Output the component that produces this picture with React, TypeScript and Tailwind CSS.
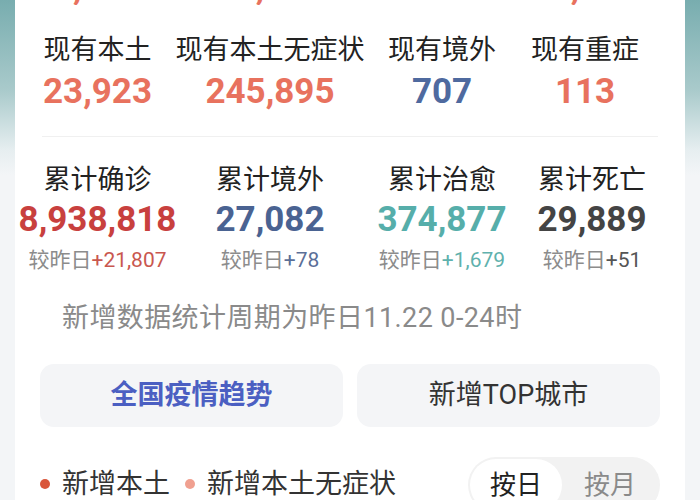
import React from "react";

const now = [
  { label: "现有本土", value: "23,923", color: "text-[#e8725e]" },
  { label: "现有本土无症状", value: "245,895", color: "text-[#e8725e]" },
  { label: "现有境外", value: "707", color: "text-[#4f6a9f]" },
  { label: "现有重症", value: "113", color: "text-[#e8725e]" },
];

const total = [
  { label: "累计确诊", value: "8,938,818", diff: "+21,807", color: "text-[#c8403e]", diffColor: "text-[#c9574f]" },
  { label: "累计境外", value: "27,082", diff: "+78", color: "text-[#4a6392]", diffColor: "text-[#5b6f98]" },
  { label: "累计治愈", value: "374,877", diff: "+1,679", color: "text-[#56aeaa]", diffColor: "text-[#5fb1ad]" },
  { label: "累计死亡", value: "29,889", diff: "+51", color: "text-[#444444]", diffColor: "text-[#555555]" },
];

// numbers of the row above, scrolled almost out of view
const cut = ["2,527", "24,936", "+12", "25,480"];

export default function App() {
  return (
    <div className="min-h-[500px] w-[700px] overflow-hidden bg-[linear-gradient(to_bottom,#78adaf_0px,#a9cacb_90px,#e6eef0_150px,#f3f5f7_175px,#f3f5f7_100%)] font-['Roboto','Noto_Sans_CJK_SC',sans-serif]">
      <div className="mx-[15px] h-[500px] overflow-hidden bg-white">
        {/* cut-off top row */}
        <div className="h-[5px] overflow-hidden">
          <div className="-mt-[32px] grid grid-cols-[165px_180px_164px_122px]">
            {cut.map((v, i) => (
              <div key={i} className="flex justify-center">
                <span className="whitespace-nowrap text-[35px] font-bold leading-[40px] text-[#e8725e]">{v}</span>
              </div>
            ))}
          </div>
        </div>

        {/* current */}
        <div className="mt-[29px] grid grid-cols-[165px_180px_164px_122px]">
          {now.map((s) => (
            <div key={s.label} className="flex flex-col items-center">
              <span className="whitespace-nowrap text-[27px] leading-[32px] text-[#222222]">{s.label}</span>
              <span className={`mt-[6px] whitespace-nowrap text-[35px] font-bold leading-[40px] ${s.color}`}>{s.value}</span>
            </div>
          ))}
        </div>

        <div className="mx-[27px] mt-[24px] h-px bg-[#f0f0f0]" />

        {/* cumulative */}
        <div className="mt-[27px] grid grid-cols-[165px_180px_164px_136px]">
          {total.map((s) => (
            <div key={s.label} className="flex flex-col items-center">
              <span className="whitespace-nowrap text-[27px] leading-[32px] text-[#222222]">{s.label}</span>
              <span className={`mt-[4px] whitespace-nowrap text-[35px] font-bold leading-[40px] ${s.color}`}>{s.value}</span>
              <span className="mt-[7px] whitespace-nowrap text-[21px] leading-[26px] text-[#8c8c8c]">
                较昨日<span className={s.diffColor}>{s.diff}</span>
              </span>
            </div>
          ))}
        </div>

        <p className="mt-[29px] pl-[47px] text-[27px] tracking-[0.4px] leading-[32px] text-[#8a8a8a]">新增数据统计周期为昨日11.22 0-24时</p>

        <div className="mt-[30px] flex gap-[14px] px-[25px]">
          <button className="flex h-[63px] flex-1 items-center justify-center rounded-[14px] bg-[#f4f5f7] text-[27px] font-bold text-[#4b5fc2]">
            全国疫情趋势
          </button>
          <button className="flex h-[63px] flex-1 items-center justify-center rounded-[14px] bg-[#f4f5f7] text-[27px] text-[#333333]">
            新增TOP城市
          </button>
        </div>

        <div className="mt-[30px] flex items-start justify-between pl-[25px] pr-[25px]">
          <div className="mt-[11px] flex items-center text-[27px] leading-[32px] text-[#333333]">
            <span className="mr-[12px] h-[10px] w-[10px] rounded-full bg-[#d9563b]" />
            <span>新增本土</span>
            <span className="ml-[15px] mr-[12px] h-[10px] w-[10px] rounded-full bg-[#f0a090]" />
            <span>新增本土无症状</span>
          </div>
          <div className="flex h-[56px] w-[192px] rounded-full bg-[#f2f2f2] p-[2px]">
            <div className="flex w-[92px] items-center justify-center rounded-full bg-white text-[26px] text-[#222222]">按日</div>
            <div className="flex flex-1 items-center justify-center text-[26px] text-[#8a8a8a]">按月</div>
          </div>
        </div>
      </div>
    </div>
  );
}
